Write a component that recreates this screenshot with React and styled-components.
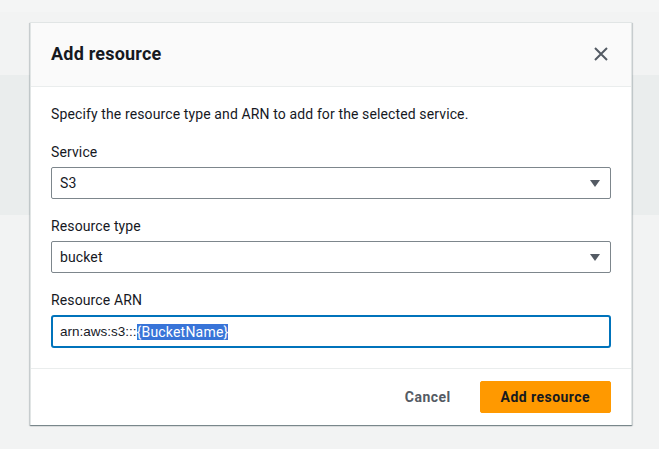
import React from 'react';
import styled, { createGlobalStyle } from 'styled-components';

const GlobalStyle = createGlobalStyle`
  html, body {
    margin: 0;
    padding: 0;
  }
  body {
    font-family: Roboto, "Liberation Sans", sans-serif;
    color: #16191f;
    letter-spacing: 0.12px;
  }
`;

const StyledPage = styled.div`
  position: relative;
  width: 659px;
  height: 449px;
  background: #f2f3f3;
  overflow: hidden;
  display: flex;
  flex-direction: column;
`;

const StyledTopStrip = styled.div`
  height: 12px;
  background: #f4f5f5;
`;

const StyledBand = styled.div`
  margin-top: 63px;
  height: 140px;
  background: #eaeded;
`;

const StyledModal = styled.div`
  position: absolute;
  left: 30px;
  top: 22px;
  width: 602px;
  background: #fff;
  border: 1px solid #e1e5e5;
  border-bottom: none;
  box-shadow: 0 1px 1px 0 rgba(0, 28, 36, 0.35), 1px 1px 1px 0 rgba(0, 28, 36, 0.12),
    -1px 1px 1px 0 rgba(0, 28, 36, 0.12);
  box-sizing: border-box;
`;

const StyledHeader = styled.div`
  display: flex;
  align-items: center;
  justify-content: space-between;
  height: 64px;
  padding: 0 20px 2px;
  box-sizing: border-box;
  background: #fafafa;
  border-bottom: 1px solid #eaeded;
`;

const StyledTitle = styled.h2`
  margin: 0;
  font-size: 18px;
  font-weight: 700;
  line-height: 24px;
  letter-spacing: 0.2px;
  color: #16191f;
`;

const StyledClose = styled.button`
  display: flex;
  align-items: center;
  justify-content: center;
  width: 24px;
  height: 24px;
  margin-right: -2px;
  padding: 0;
  border: none;
  background: none;
  color: #545b64;
`;

const StyledBody = styled.div`
  padding: 16px 20px 20px;
  display: flex;
  flex-direction: column;
`;

const StyledDescription = styled.p`
  margin: 0 0 16px;
  font-size: 14px;
  line-height: 22px;
`;

const StyledField = styled.div`
  display: flex;
  flex-direction: column;
  gap: 4px;
  & + & {
    margin-top: 16px;
  }
`;

const StyledLabel = styled.label`
  font-size: 14px;
  line-height: 22px;
  color: #16191f;
`;

const StyledSelect = styled.div`
  display: flex;
  align-items: center;
  justify-content: space-between;
  height: 32px;
  box-sizing: border-box;
  padding: 0 10px 0 8px;
  border: 1px solid #7d868c;
  border-radius: 2px;
  font-size: 14px;
`;

const StyledCaret = styled.span`
  width: 0;
  height: 0;
  border-left: 5px solid transparent;
  border-right: 5px solid transparent;
  border-top: 7px solid #545b64;
`;

const StyledInput = styled.div`
  display: flex;
  align-items: center;
  height: 33px;
  box-sizing: border-box;
  padding: 0 7px;
  border: 2px solid #0073bb;
  border-radius: 3px;
  font-size: 14px;
`;

const StyledPrefix = styled.span`
  font-family: "Liberation Sans", Arial, sans-serif;
  font-size: 13.5px;
  letter-spacing: 0;
  color: #16191f;
`;

const StyledSelection = styled.span`
  background: #3874d8;
  color: #fff;
  line-height: 16px;
  letter-spacing: 0.2px;
`;

const StyledFooter = styled.div`
  display: flex;
  justify-content: flex-end;
  align-items: center;
  gap: 8px;
  padding: 12px 20px;
  border-top: 1px solid #eaeded;
`;

const StyledButton = styled.button`
  height: 32px;
  padding: 0 20px;
  border: 1px solid ${(p) => (p.$primary ? '#ff9900' : 'transparent')};
  border-radius: 2px;
  background: ${(p) => (p.$primary ? '#ff9900' : 'transparent')};
  color: ${(p) => (p.$primary ? '#16191f' : '#545b64')};
  font-family: Roboto, "Liberation Sans", sans-serif;
  font-size: 14px;
  font-weight: 700;
  letter-spacing: 0.45px;
`;

const SelectField = ({ label, value }) => (
  <StyledField>
    <StyledLabel>{label}</StyledLabel>
    <StyledSelect>
      <span>{value}</span>
      <StyledCaret />
    </StyledSelect>
  </StyledField>
);

function App() {
  return (
    <>
      <GlobalStyle />
      <StyledPage>
        <StyledTopStrip />
        <StyledBand />
        <StyledModal>
          <StyledHeader>
            <StyledTitle>Add resource</StyledTitle>
            <StyledClose aria-label="Close">
              <svg width="16" height="16" viewBox="0 0 16 16">
                <path d="M2 2l12 12M14 2L2 14" stroke="currentColor" strokeWidth="2" fill="none" />
              </svg>
            </StyledClose>
          </StyledHeader>
          <StyledBody>
            <StyledDescription>
              Specify the resource type and ARN to add for the selected service.
            </StyledDescription>
            <SelectField label="Service" value="S3" />
            <SelectField label="Resource type" value="bucket" />
            <StyledField>
              <StyledLabel>Resource ARN</StyledLabel>
              <StyledInput>
                <StyledPrefix>arn:aws:s3:::</StyledPrefix>
                <StyledSelection>{'{BucketName}'}</StyledSelection>
              </StyledInput>
            </StyledField>
          </StyledBody>
          <StyledFooter>
            <StyledButton>Cancel</StyledButton>
            <StyledButton $primary>Add resource</StyledButton>
          </StyledFooter>
        </StyledModal>
      </StyledPage>
    </>
  );
}

export default App;
